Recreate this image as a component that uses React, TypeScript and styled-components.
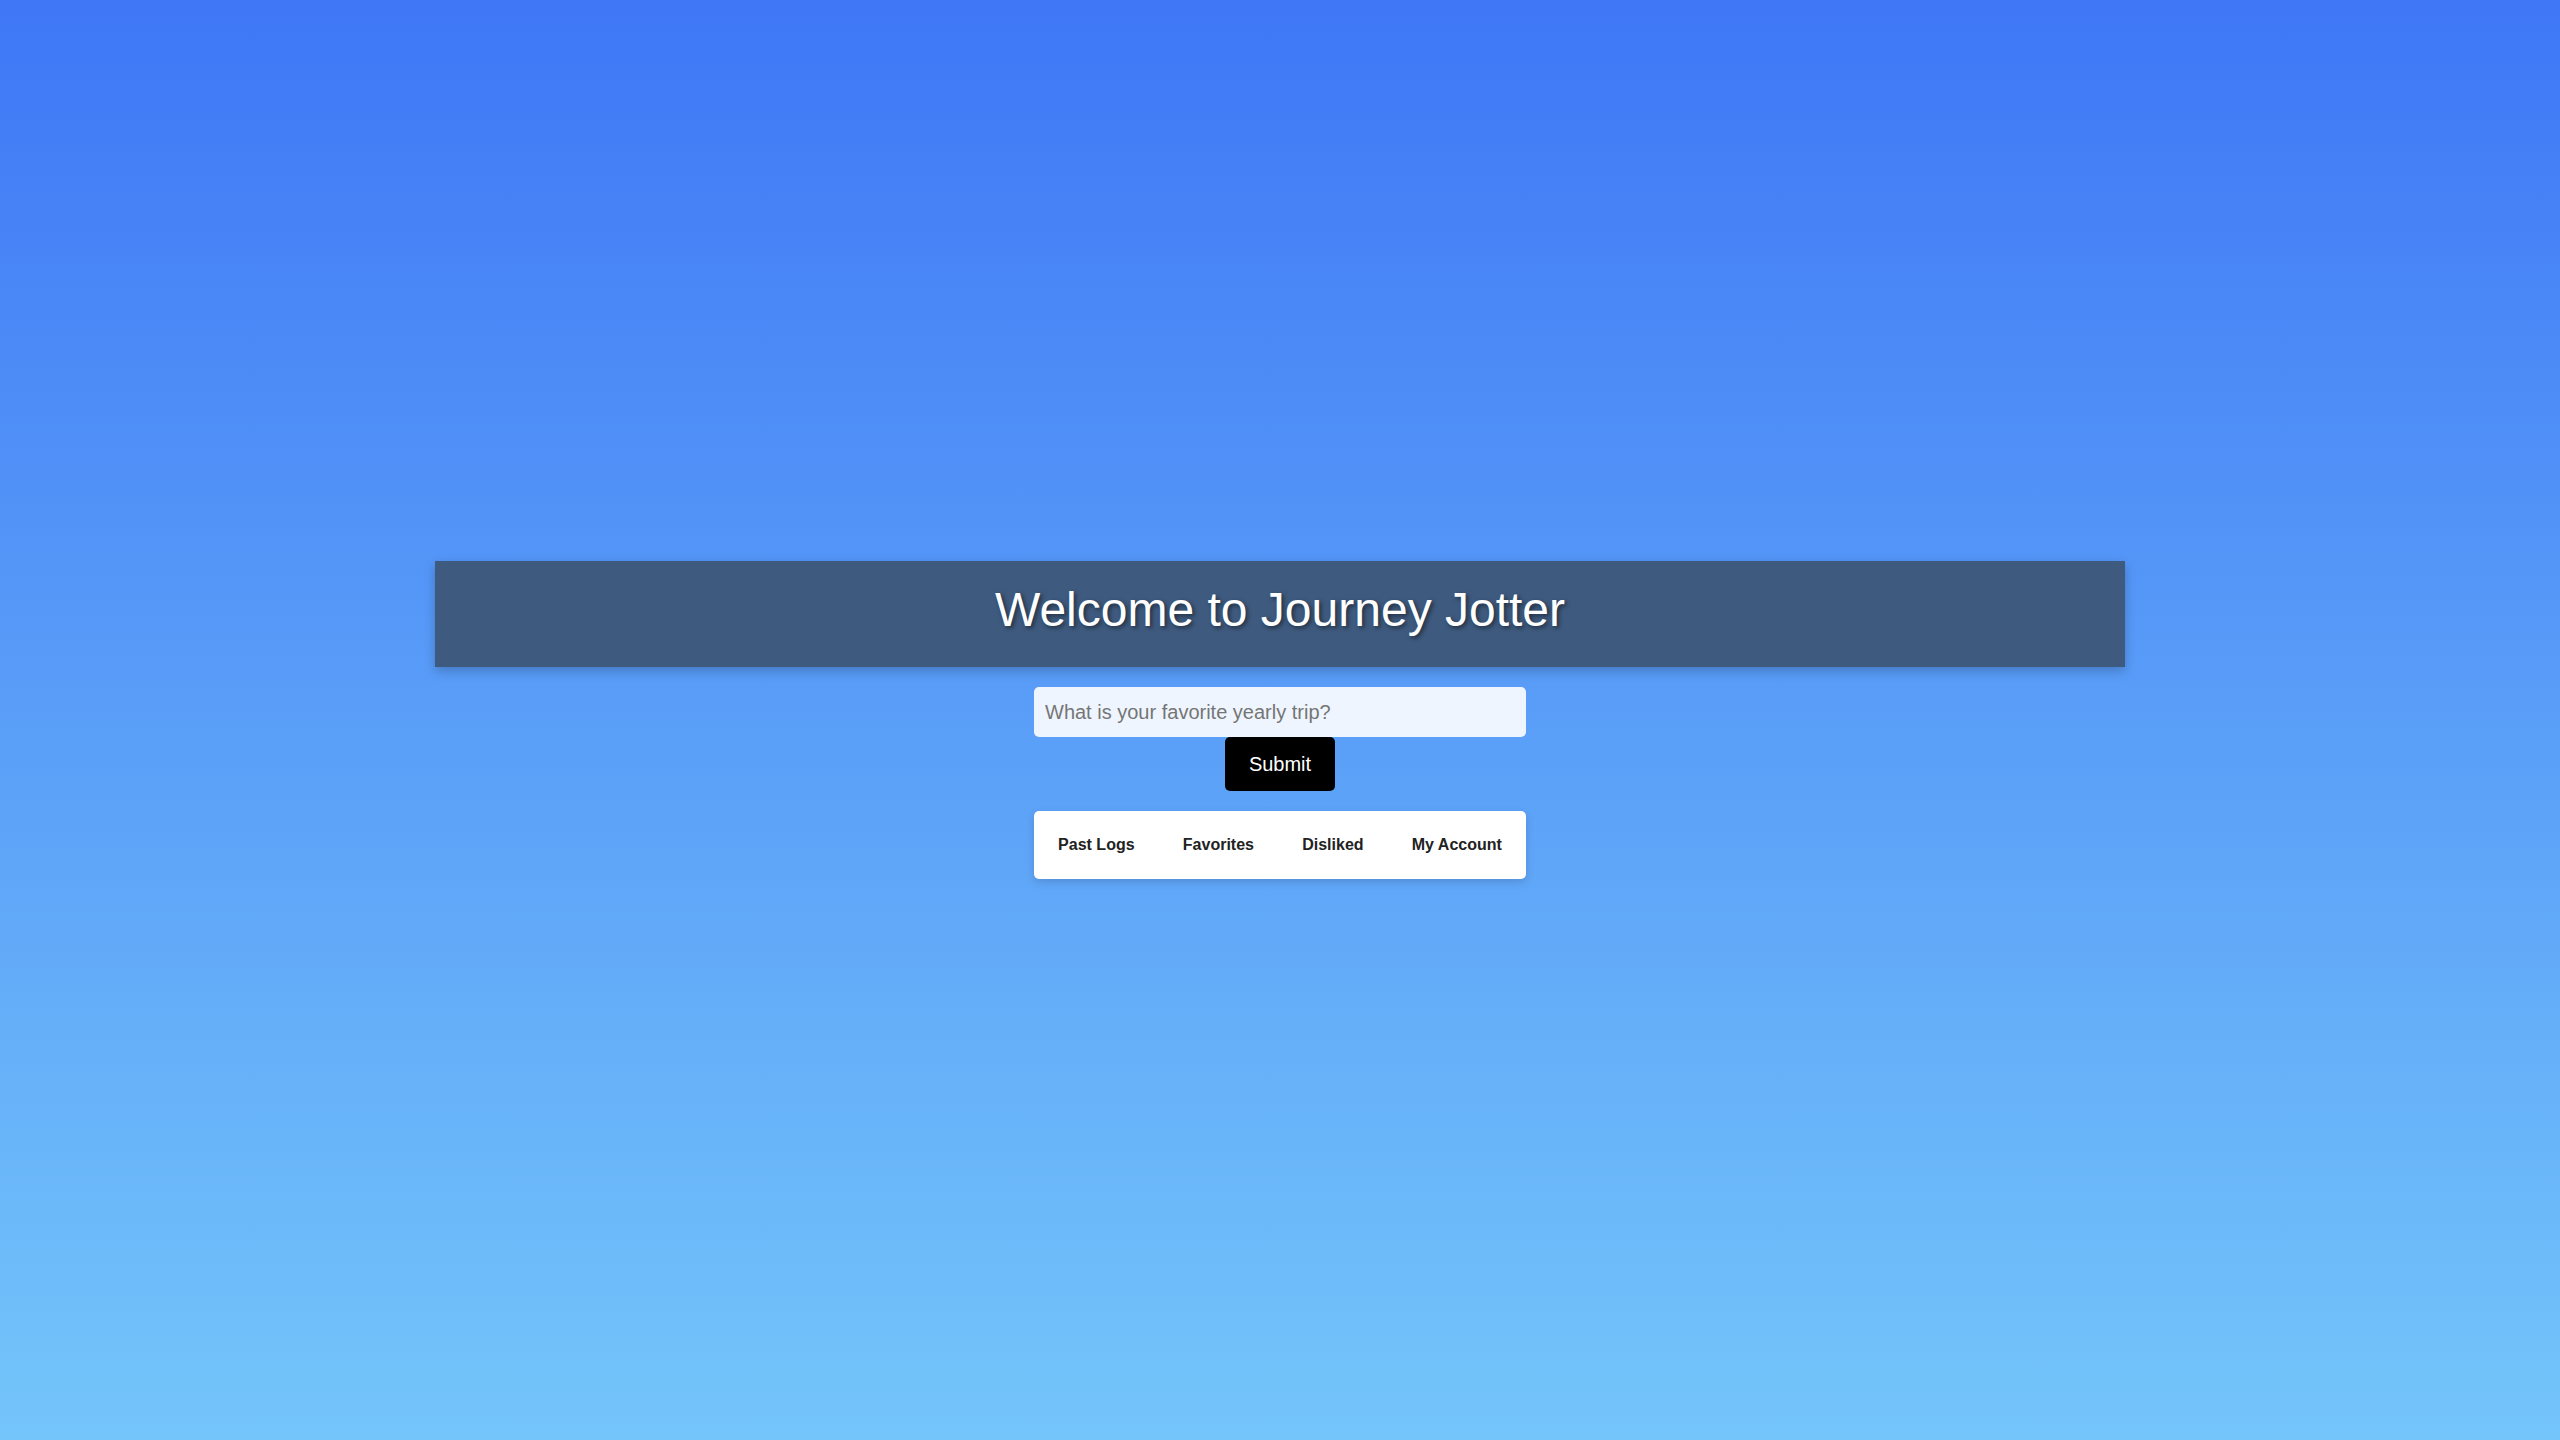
import React from "react";
import styled, { createGlobalStyle } from "styled-components";

const GlobalStyle = createGlobalStyle`
  html, body {
    margin: 0;
    padding: 0;
    height: 100%;
  }
  body {
    font-family: "Liberation Sans", Arial, sans-serif;
    background: linear-gradient(to bottom, #3f77f6 0%, #74c5fa 100%);
    min-height: 100vh;
  }
  #root {
    min-height: 100vh;
  }
`;

const Page = styled.main`
  min-height: 100vh;
  display: flex;
  flex-direction: column;
  align-items: center;
  justify-content: center;
  box-sizing: border-box;
`;

const Header = styled.header`
  width: 1690px;
  height: 106px;
  box-sizing: border-box;
  padding: 21px 0 30px;
  background: #3e5a7e;
  box-shadow: 0 4px 10px rgba(0, 0, 0, 0.22);
  text-align: center;
`;

const Title = styled.h1`
  margin: 0;
  font-family: "Liberation Sans", Arial, sans-serif;
  font-size: 48px;
  font-weight: 400;
  line-height: normal;
  color: #ffffff;
  text-shadow: 2px 2px 4px rgba(0, 0, 0, 0.5);
`;

const Form = styled.form`
  margin-top: 20px;
  display: flex;
  flex-direction: column;
  align-items: center;
`;

const TripInput = styled.input`
  width: 492px;
  height: 50px;
  box-sizing: border-box;
  padding: 0 11px;
  border: none;
  border-radius: 5px;
  background: #eef5ff;
  font-family: "Liberation Sans", Arial, sans-serif;
  font-size: 20px;
  color: #333;
  outline: none;
  &::placeholder {
    color: #757575;
  }
`;

const SubmitButton = styled.button`
  width: 110px;
  height: 54px;
  box-sizing: border-box;
  padding: 0;
  border: none;
  border-radius: 5px;
  background: #000000;
  color: #ffffff;
  font-family: "Liberation Sans", Arial, sans-serif;
  font-size: 20px;
  cursor: pointer;
`;

const Nav = styled.nav`
  margin-top: 20px;
  width: 492px;
  height: 68px;
  box-sizing: border-box;
  display: flex;
  align-items: center;
  justify-content: space-around;
  background: #ffffff;
  border-radius: 5px;
  box-shadow: 0 3px 8px rgba(0, 0, 0, 0.15);
`;

const NavItem = styled.a`
  font-family: "Liberation Sans", Arial, sans-serif;
  font-size: 16px;
  font-weight: 700;
  color: #222222;
  text-decoration: none;
  cursor: pointer;
`;

const navItems = ["Past Logs", "Favorites", "Disliked", "My Account"];

export default function App() {
  return (
    <>
      <GlobalStyle />
      <Page>
        <Header>
          <Title>Welcome to Journey Jotter</Title>
        </Header>
        <Form onSubmit={(e) => e.preventDefault()}>
          <TripInput type="text" placeholder="What is your favorite yearly trip?" />
          <SubmitButton type="submit">Submit</SubmitButton>
        </Form>
        <Nav>
          {navItems.map((item) => (
            <NavItem key={item}>{item}</NavItem>
          ))}
        </Nav>
      </Page>
    </>
  );
}
